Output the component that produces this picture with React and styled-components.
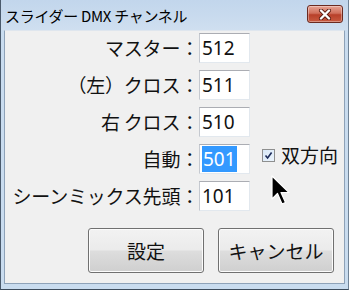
import React from "react";
import styled, { createGlobalStyle } from "styled-components";

const Global = createGlobalStyle`
  html, body { margin: 0; padding: 0; background: #f0f0f0; }
  body { font-family: "Noto Sans CJK JP", "Noto Sans", sans-serif; }
`;

const Window = styled.div`
  position: relative;
  width: 349px;
  height: 290px;
  box-sizing: border-box;
  display: flex;
  flex-direction: column;
  background: #c9dcef;
  border-left: 1px solid #4a5a6c;
  border-right: 1px solid #6f8296;
  border-bottom: 1px solid #3d4c5c;
  overflow: hidden;
`;

const TitleBar = styled.div`
  height: 30px;
  flex: none;
  display: flex;
  align-items: center;
  justify-content: space-between;
  padding: 0 5px 0 4px;
  background: linear-gradient(to bottom, #c2d6ec 0%, #c9dbee 60%, #cfdff0 100%);
`;

const Title = styled.div`
  font-size: 15px;
  line-height: 20px;
  color: #000;
  padding-top: 1px;
  letter-spacing: -0.3px;
`;

const CloseBtn = styled.div`
  width: 36px;
  height: 18px;
  margin-top: -2px;
  box-sizing: border-box;
  border: 1px solid #6b2a20;
  border-radius: 3px;
  background: linear-gradient(to bottom, #e8a393 0%, #d0705c 45%, #b8402a 55%, #c85a40 100%);
  display: flex;
  align-items: center;
  justify-content: center;
  box-shadow: inset 0 0 0 1px rgba(255,255,255,0.35);
`;

const Client = styled.div`
  flex: 1;
  margin: 0 3px 5px 3px;
  background: #f0f0f0;
  border: 1px solid #8ea2b8;
  border-top-color: #dfe6ee;
  box-sizing: border-box;
  display: flex;
  flex-direction: column;
`;

const Form = styled.div`
  display: grid;
  grid-template-columns: 194px 51px auto;
  grid-auto-rows: 30px;
  row-gap: 7px;
  padding-top: 2px;
  align-items: center;
`;

const Label = styled.div`
  font-size: 19px;
  line-height: 30px;
  color: #111;
  text-align: right;
  white-space: nowrap;
  letter-spacing: -0.2px;
`;

const Field = styled.div`
  height: 30px;
  box-sizing: border-box;
  background: #fff;
  border: 1px solid #e2e8ee;
  border-top-color: #abadb3;
  border-left-color: #c5c9d0;
  font-size: 19px;
  line-height: 28px;
  padding-left: 2px;
  color: #111;
  font-family: "Noto Sans", "DejaVu Sans", sans-serif;
`;

const Selected = styled.span`
  background: #3399ff;
  color: #fff;
  padding: 0 1px 0 1px;
  display: inline-block;
  line-height: 26px;
`;

const CheckWrap = styled.div`
  display: flex;
  align-items: center;
  gap: 6px;
  margin-left: 12px;
  font-size: 19px;
  line-height: 30px;
  color: #111;
  margin-top: -8px;
`;

const Box = styled.div`
  width: 13px;
  height: 13px;
  box-sizing: border-box;
  border: 1px solid #8e8f8f;
  background: linear-gradient(135deg, #d9e8f7, #eaf3fc);
  display: flex;
  align-items: center;
  justify-content: center;
`;

const Buttons = styled.div`
  display: flex;
  gap: 14px;
  padding-left: 83px;
  margin-top: 17px;
`;

const Button = styled.div`
  width: 116px;
  height: 45px;
  box-sizing: border-box;
  border: 1px solid #707070;
  border-radius: 3px;
  background: linear-gradient(to bottom, #f2f2f2 0%, #ebebeb 48%, #dddddd 52%, #cfcfcf 100%);
  box-shadow: inset 0 0 0 1px #fcfcfc;
  display: flex;
  align-items: center;
  justify-content: center;
  font-size: 19px;
  color: #111;
`;

const Cursor = styled.svg`
  position: absolute;
  left: 270px;
  top: 175px;
`;

const rows = [
  { label: "マスター：", value: "512" },
  { label: "（左）クロス：", value: "511" },
  { label: "右 クロス：", value: "510" },
  { label: "自動：", value: "501", selected: true, check: true },
  { label: "シーンミックス先頭：", value: "101" },
];

export default function App() {
  return (
    <>
      <Global />
      <Window>
        <TitleBar>
          <Title>スライダー DMX チャンネル</Title>
          <CloseBtn>
            <svg width="14" height="11" viewBox="0 0 14 11">
              <path d="M3 1.5 L11 9.5 M11 1.5 L3 9.5" stroke="#5a1a10" strokeWidth="4" strokeLinecap="round" />
              <path d="M3 1.5 L11 9.5 M11 1.5 L3 9.5" stroke="#fff" strokeWidth="2.4" strokeLinecap="round" />
            </svg>
          </CloseBtn>
        </TitleBar>
        <Client>
          <Form>
            {rows.map((r) => (
              <React.Fragment key={r.label}>
                <Label>{r.label}</Label>
                <Field>{r.selected ? <Selected>{r.value}</Selected> : r.value}</Field>
                {r.check ? (
                  <CheckWrap>
                    <Box>
                      <svg width="9" height="9" viewBox="0 0 9 9">
                        <path d="M1.5 4.5 L3.6 7 L7.6 1.5" stroke="#1c2b5a" strokeWidth="1.6" fill="none" />
                      </svg>
                    </Box>
                    双方向
                  </CheckWrap>
                ) : (
                  <div />
                )}
              </React.Fragment>
            ))}
          </Form>
          <Buttons>
            <Button>設定</Button>
            <Button>キャンセル</Button>
          </Buttons>
        </Client>
        <Cursor width="20" height="31" viewBox="0 0 20 31">
          <path d="M1 1 L1 24 L6.5 18.5 L11 29 L14.5 27.5 L10 17.5 L18 17.5 Z" fill="#000" stroke="#fff" strokeWidth="1.2" strokeLinejoin="round" />
        </Cursor>
      </Window>
    </>
  );
}
